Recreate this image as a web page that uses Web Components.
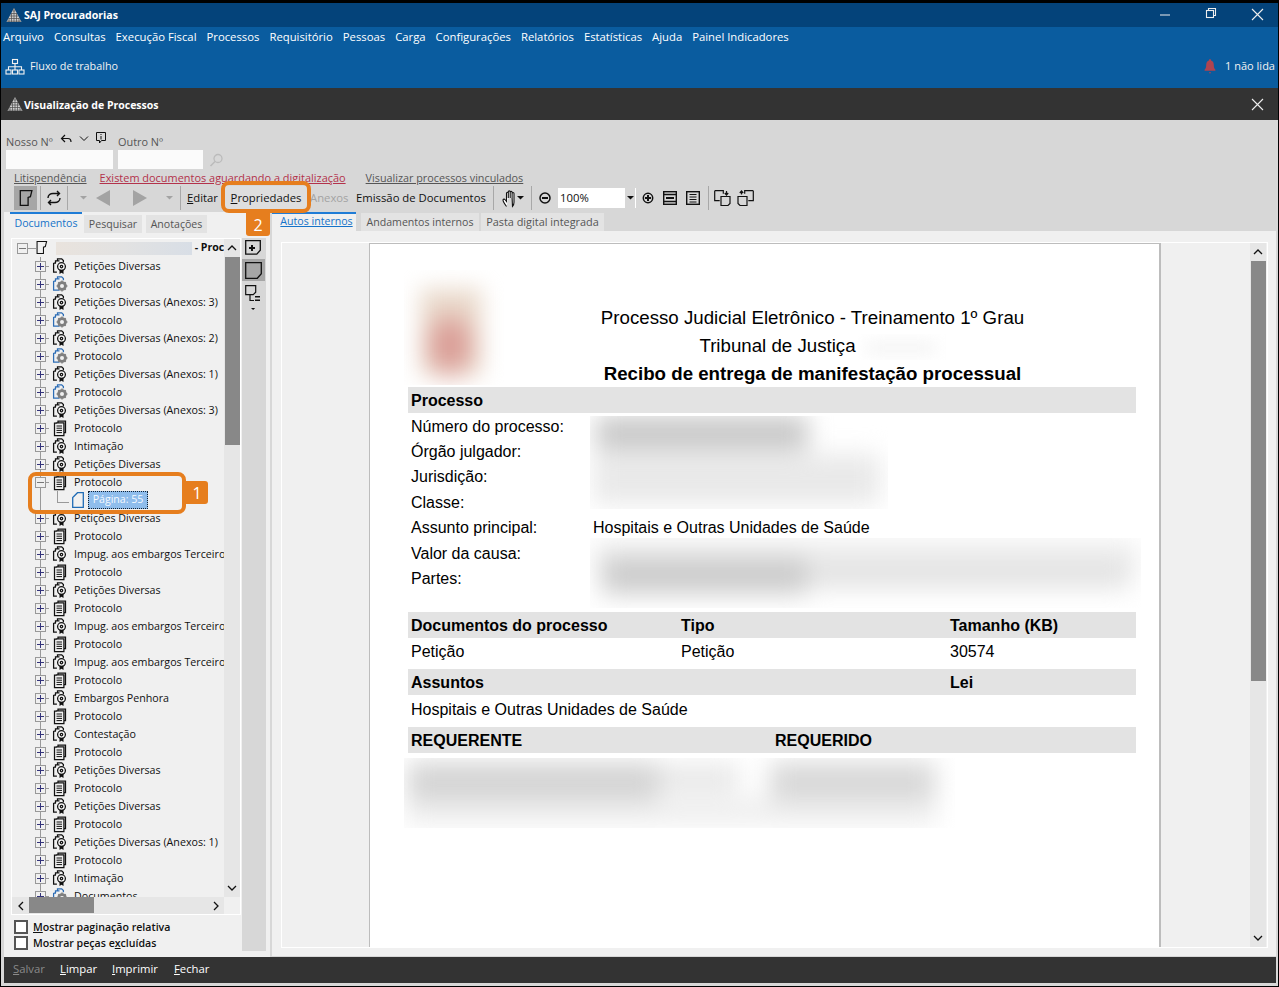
<!DOCTYPE html>
<html lang="pt-BR"><head><meta charset="utf-8"><title>SAJ Procuradorias</title>
<style>
html,body{margin:0;padding:0;background:#000;overflow:hidden}
body{width:1279px;height:987px;font:11.3px "Open Sans","Liberation Sans",sans-serif;color:#111}
</style></head><body>
<saj-app></saj-app>
<script>
const ICONS={
logo:'<path d="M8 1 15.5 15H.5Z" fill="#cfcfcf"/><path d="M1 14.2h14M2.6 11.5h10.8M4 9h8M5.4 6.5h5.2M6.7 4h2.6M8 1v14M5.5 6v9M10.5 6v9M3 11v4M13 11v4" stroke="#4a4a4a" stroke-width=".7" fill="none"/>',
flow:'<g fill="none" stroke="currentColor" stroke-width="1.1"><rect x="7.5" y="1.5" width="5" height="4"/><rect x="1" y="12" width="5" height="4"/><rect x="7.5" y="12" width="5" height="4"/><rect x="14" y="12" width="5" height="4"/><path d="M10 5.5V12M3.5 12V8.7h13V12"/></g>',
bell:'<path d="M8 1.2c.8 0 1.1.6 1.1 1.2 2.1.7 2.7 2.6 2.7 4.6 0 2.3.4 3.6 1.6 4.8v1H2.6v-1C3.8 10.600 4.200 9.300 4.200 7c0-2 .6-3.900 2.700-4.600C6.900 1.800 7.200 1.200 8 1.200Z" fill="#b04450"/><path d="M6.800 14.300h2.400L8 15.800Z" fill="#b04450"/>',
x:'<path d="M1 1l11 11M12 1 1 12" stroke="#eee" stroke-width="1.100" fill="none"/>',
restore:'<g fill="none" stroke="#eee" stroke-width="1.100"><rect x=".5" y="2.500" width="7" height="7"/><path d="M2.500 2.500v-2h7v7h-2"/></g>',
min:'<path d="M0 1h10" stroke="#eee" stroke-width="1"/>',
undo:'<path d="M5 1 1.500 4.500 5 8M2 4.500h6c2 0 3 1.500 3 3.500" fill="none" stroke="#111" stroke-width="1.200"/>',
chev:'<path d="M1 1.500 5 5.500 9 1.500" fill="none" stroke="#111"/>',
infodoc:'<path d="M.5.500h9v8h-4l-2 2.500V8.500h-3Z" fill="none" stroke="#111"/><path d="M5 2v1M5 4v3.500" stroke="#111"/>',
search:'<circle cx="9" cy="5.500" r="4" fill="none" stroke="#bbb" stroke-width="1.300"/><path d="M6 8.500 1.500 13" stroke="#bbb" stroke-width="1.600"/>',
note:'<path d="M.7.700h11.600l-1.500 6 -2.300.8v7.800H.7Z" fill="none" stroke="#111" stroke-width="1.300" transform="translate(.6 0)"/>',
refresh:'<g fill="none" stroke="#111" stroke-width="1.400"><path d="M2 8c0-3 2.500-4.500 5-4.500h6M11 1l2.500 2.500L11 6"/><path d="M14 8c0 3-2.500 4.500-5 4.500H3M5 10l-2.500 2.500L5 15"/></g>',
left:'<path d="M0 8 14 0v16Z" fill="#a3a3a3"/>',
right:'<path d="M14 8 0 0v16Z" fill="#a3a3a3"/>',
caret:'<path d="M0 0h7L3.500 3.500Z" fill="currentColor"/>',
hand:'<path d="M4.500 16.500C3 14.500 1 11.500 1 10c0-1 1.500-1.200 2.200-.2l1.300 1.700V3.300c0-1.400 1.800-1.400 1.800 0V8M6.300 8V1.800c0-1.300 1.900-1.300 1.900 0V8M8.200 8V2.300c0-1.300 1.900-1.300 1.900 0V8M10.100 8V3.500c0-1.300 1.900-1.300 1.900 0v8.700c0 1.800-.5 3.200-1.500 4.300Z" fill="#fff" stroke="#111" stroke-width="1.100"/>',
zoomout:'<circle cx="7" cy="7" r="5" fill="none" stroke="#111" stroke-width="1.500"/><path d="M4 7h6" stroke="#111" stroke-width="2"/>',
zoomin:'<circle cx="7" cy="7" r="4.700" fill="none" stroke="#111" stroke-width="1.500"/><path d="M4 7h6M7 4v6" stroke="#111" stroke-width="2"/>',
fitw:'<g fill="none" stroke="#111"><rect x=".7" y=".7" width="12.600" height="12.600" stroke-width="1.400"/><path d="M1 3.500h12M1 10.500h12" stroke-width="1.300"/><path d="M3 7h8" stroke-width="2"/></g>',
fitp:'<g fill="none" stroke="#111"><rect x=".7" y=".7" width="12.600" height="12.600" stroke-width="1.400"/><path d="M3.500 3.500h7M3.500 6h7M3.500 8.500h7M3.500 11h7" stroke-width="1"/></g>',
rotr:'<g fill="none" stroke="#111" stroke-width="1.200"><path d="M.7.700h8.600v3M.7.700v10h5M7 15.500v-9h9v7l-2 2Z"/><path d="M12.500 1v3.500M10.800 3l1.700 2 1.700-2"/></g>',
rotl:'<g fill="none" stroke="#111" stroke-width="1.200"><path d="M16.300.700H7.700v3M16.300.700v10h-5M1 6.500h9v9H3l-2-2Z"/><path d="M4.500 1v3.500M2.800 3l1.700-2 1.700 2"/></g>',
addnote:'<path d="M.7.700h14.600v9.500l-3.500 4H.7Z" fill="none" stroke="#111" stroke-width="1.300"/><path d="M4 8h6M7 5v6" stroke="#111" stroke-width="2"/>',
bignote:'<path d="M.7.700h15.600v11l-4 4.600H.7Z" fill="none" stroke="#111" stroke-width="1.300"/>',
treeic:'<g fill="none" stroke="#111" stroke-width="1.200"><path d="M.7.700h10v6.500l-2.500 2.500H.7Z"/><path d="M5 10v5.500h4"/></g><path d="M10 11h5v1.500h-5ZM10 14.500h5V16h-5Z" fill="#111"/>',
award:'<g fill="none" stroke="#111" stroke-width="1.250"><path d="M5.500 3V.9h4.200l1.700 1.700v1.700M3.500 5V2.900h4M1.600 5v9h3.300M1.600 5h2.400"/><circle cx="9.500" cy="8.600" r="3.900" fill="#f0f0f0"/><circle cx="9.500" cy="8.600" r="1.200"/></g><path d="M7.500 11.800v4.200l2-1.200 2 1.200v-4.200Z" fill="#111"/>',
awardblue:'<g fill="none" stroke="#2d6db5" stroke-width="1.250"><path d="M5.500 3V.9h4.200l1.700 1.700v1.700M3.500 5V2.900h4M1.600 5v9h6M1.600 5h2.400"/></g><circle cx="10" cy="10" r="4.800" fill="#7f7f7f"/><path d="M10 4.600v10.800M4.600 10h10.800M6.300 6.300l7.400 7.400M13.700 6.300l-7.400 7.400" stroke="#7f7f7f" stroke-width="1.400"/><circle cx="10" cy="10" r="2" fill="#f0f0f0"/>',
clip:'<g fill="none" stroke="#111" stroke-width="1.250"><path d="M6 3V1h7.500v11.500H12M4.500 3v-.1h7.400v12.600H2.500V3Z"/><path d="M4.500 6h5.500M4.500 8.200h5.500M4.500 10.400h5.500M4.500 12.600h5.500" stroke-width="1"/></g>',
page:'<path d="M.7 15.300V5.500L5.500.7h5.800v14.600Z" fill="none" stroke="#1f6bb5" stroke-width="1.300"/>',
up:'<path d="M1 5 5 1 9 5" fill="none" stroke="#111" stroke-width="1.300"/>',
down:'<path d="M1 1 5 5 9 1" fill="none" stroke="#111" stroke-width="1.300"/>',
lft:'<path d="M5 1 1 5 5 9" fill="none" stroke="#111" stroke-width="1.300"/>',
rgt:'<path d="M1 1 5 5 1 9" fill="none" stroke="#111" stroke-width="1.300"/>'
};
const BOX={logo:16,flow:20,bell:16,x:13,restore:10,min:10,undo:12,chev:10,infodoc:10,search:14,note:13,refresh:16,left:14,right:14,caret:7,hand:13,zoomout:14,zoomin:14,fitw:14,fitp:14,rotr:17,rotl:17,addnote:16,bignote:17,treeic:16,award:16,awardblue:16,clip:16,page:12,up:10,down:10,lft:6,rgt:6};
const BOXH={flow:17,hand:17,caret:4,restore:10,min:2,undo:9,chev:7,infodoc:11,note:16,left:16,right:16,page:16,up:6,down:6,lft:10,rgt:10,rotr:16,rotl:16};
function def(name,css,html,init){
  customElements.define(name,class extends HTMLElement{
    constructor(){super();this.attachShadow({mode:'open'});}
    connectedCallback(){
      if(this._done)return;this._done=1;
      this.shadowRoot.innerHTML='<style>'+css+'</style>'+(typeof html==='function'?html(this):html);
      if(init)init(this);
    }
  });
}
def('saj-icon',':host{display:inline-flex;flex:none;line-height:0}svg{display:block;overflow:visible}','',el=>{
  const n=el.getAttribute('name'),w=BOX[n]||16,h=BOXH[n]||w,s=parseFloat(el.getAttribute('scale')||1);
  el.shadowRoot.innerHTML+=`<svg width="${w*s}" height="${h*s}" viewBox="0 0 ${w} ${h}">${ICONS[n]}</svg>`;
});
def('saj-titlebar',`:host{display:flex;align-items:center;height:24px;background:#04437a;color:#fff;padding:0 14px 0 5px}
b{font-size:10.6px;font-weight:700;margin:0 0 0 2px;flex:1}
.c{display:flex;align-items:center;justify-content:center}
`,`<saj-icon name="logo"></saj-icon><b><slot></slot></b>
<span class="c" style="margin-right:36px"><saj-icon name="min"></saj-icon></span>
<span class="c" style="margin-right:35px;margin-bottom:5px"><saj-icon name="restore"></saj-icon></span>
<span class="c" style="margin-bottom:2px"><saj-icon name="x"></saj-icon></span>`);
def('saj-ribbon',`:host{display:flex;flex-direction:column;height:61px;background:#0a5c9f;color:#fff}
nav{display:flex;gap:10px;height:20px;align-items:center;padding-left:2px}
nav span{margin-bottom:2px}
.flow{display:flex;align-items:center;height:38px;padding:0 3px 0 4px;color:#f2f2f2;font-size:10.8px}
.flow span{margin:0 0 2px 5px;flex:1}
.flow i{font-style:normal;margin:0 0 2px 7px;font-size:11px}`,
`<nav>${['Arquivo','Consultas','Execução Fiscal','Processos','Requisitório','Pessoas','Carga','Configurações','Relatórios','Estatísticas','Ajuda','Painel Indicadores'].map(t=>`<span>${t}</span>`).join('')}</nav>
<div class="flow"><saj-icon name="flow"></saj-icon><span>Fluxo de trabalho</span><saj-icon name="bell"></saj-icon><i>1 não lida</i></div>`);
def('saj-subtitle',`:host{display:flex;align-items:center;height:32px;background:#333;color:#fff;padding:0 14px 0 6px}
b{font-size:10.5px;font-weight:700;margin:2px 0 0 1px;flex:1}`,`<saj-icon name="logo"></saj-icon><b><slot></slot></b><saj-icon name="x"></saj-icon>`);
def('saj-form',`:host{display:block;height:65px;padding-left:5px;color:#555;box-sizing:border-box;font-size:10.9px}
.r1{display:flex;height:49px}
.f{display:flex;flex-direction:column}
.lab{display:flex;align-items:flex-end;margin-top:10px;height:17px;padding-bottom:3px;line-height:11px}
.inp{background:#fbfbfb;height:19px}
.l{display:flex;height:16px;align-items:flex-end;padding-left:8px;line-height:14px;font-size:10.8px}
a{text-decoration:underline;color:#555}
a.r{color:#b3324b;margin-left:13px;font-size:10.95px}
a.v{margin-left:20px}`,
`<div class="r1">
<div class="f" style="width:107px;margin-right:5px"><div class="lab"><span>Nosso Nº</span>
<saj-icon name="undo" style="margin:0 0 4px 7px"></saj-icon><saj-icon name="chev" style="margin:0 0 5px 7px"></saj-icon><saj-icon name="infodoc" style="margin:0 0 4px 7px"></saj-icon></div><div class="inp"></div></div>
<div class="f" style="width:85px"><div class="lab"><span>Outro Nº</span></div><div class="inp"></div></div>
<saj-icon name="search" style="margin:33px 0 0 6px"></saj-icon></div>
<div class="l"><a>Litispendência</a><a class="r">Existem documentos aguardando a digitalização</a><a class="v">Visualizar processos vinculados</a></div>`);
def('saj-toolbar',`:host{display:flex;align-items:center;height:26px;padding-left:13px;color:#111;box-sizing:border-box}
.i{display:flex;align-items:center;justify-content:center;height:24px;flex:none}
.sep{width:1px;height:24px;background:#a8a8a8;flex:none}
.on{background:#a6a6a6}
.t{white-space:nowrap;flex:none;text-align:left;padding-bottom:2px}
.g{color:#a3a3a3}
.zoom{display:flex;width:78px;height:20px;background:#fff;flex:none;align-items:center;padding-left:2px;box-sizing:border-box;justify-content:space-between}
.zoom i{font-style:normal;margin-bottom:2px}
.zoom span{width:10px;height:20px;background:#d7d7d7;display:flex;align-items:center;justify-content:center;margin-right:1px}
.prop{background:#dedede;height:25px;display:flex;align-items:center;justify-content:center;padding:0}
.prop span{margin-bottom:2px}
u{text-decoration:underline}`,
`<div class="i on" style="width:23px"><saj-icon name="note"></saj-icon></div>
<div style="width:3px"></div><div class="sep"></div>
<div class="i" style="width:26px"><saj-icon name="refresh"></saj-icon></div>
<div class="sep"></div>
<div class="i g" style="width:28px;padding-left:2px;box-sizing:border-box"><saj-icon name="caret"></saj-icon></div>
<div class="i" style="width:14px"><saj-icon name="left"></saj-icon></div><div style="width:23px"></div>
<div class="i" style="width:14px"><saj-icon name="right"></saj-icon></div>
<div class="i g" style="width:33px;padding-left:12px;box-sizing:border-box"><saj-icon name="caret"></saj-icon></div>
<div class="sep"></div>
<div class="t" style="width:43px;padding-left:6px;box-sizing:border-box"><u>E</u>ditar</div>
<div class="t prop" style="width:84px"><span><u>P</u>ropriedades</span></div>
<div class="t g" style="width:48px;padding-left:2px;box-sizing:border-box">Anexos</div>
<div class="t" style="width:137px">Emissão de Documentos</div>
<div class="sep"></div>
<div class="i" style="width:23px;padding-left:5px;box-sizing:border-box"><saj-icon name="hand"></saj-icon></div>
<div class="i" style="width:7px;color:#111"><saj-icon name="caret"></saj-icon></div>
<div class="i" style="width:7px"></div><div class="sep"></div>
<div class="i" style="width:26px"><saj-icon name="zoomout"></saj-icon></div>
<div class="zoom"><i>100%</i><span><saj-icon name="caret"></saj-icon></span></div>
<div class="i" style="width:24px"><saj-icon name="zoomin"></saj-icon></div>
<div class="i" style="width:20px"><saj-icon name="fitw"></saj-icon></div>
<div class="i" style="width:26px"><saj-icon name="fitp"></saj-icon></div>
<div style="width:2px"></div><div class="sep"></div>
<div class="i" style="width:26px"><saj-icon name="rotr"></saj-icon></div>
<div class="i" style="width:20px"><saj-icon name="rotl"></saj-icon></div>`);
def('saj-tree-row',`:host{display:flex;align-items:center;height:18px;position:relative;white-space:nowrap;color:#111;font-size:10.7px;
background:linear-gradient(#999,#999) 28px 0/1px 100% no-repeat,linear-gradient(#999,#999) 28px 9px/9px 1px no-repeat}
.tw{width:11px;height:11px;margin-left:23px;box-sizing:border-box;border:1px solid #999;background:#f0f0f0;position:relative;flex:none}
.tw:before{content:"";position:absolute;left:1px;right:1px;height:1px;top:4px;background:var(--m,#33337a)}
.tw.p:after{content:"";position:absolute;top:1px;bottom:1px;left:4px;width:1px;background:var(--m,#33337a)}
saj-icon{margin-left:6px;margin-right:6px}
span{flex:none}`,
el=>{const n=el.getAttribute('icon');const t=el.getAttribute('tw');
 return `<div class="tw ${t==='m'?'':'p'}" style="${t==='m'?'--m:#777':''}"></div><saj-icon name="${n}"></saj-icon><span><slot></slot></span>`;});
def('saj-tree-page',`:host{display:flex;align-items:center;height:18px;color:#fff;white-space:nowrap;font-size:10.6px;
background:linear-gradient(#999,#999) 28px 0/1px 100% no-repeat,linear-gradient(#999,#999) 45px 0/1px 12px no-repeat,linear-gradient(#999,#999) 45px 11px/12px 1px no-repeat}
saj-icon{margin-left:60px}
span{margin-left:4px;background:#8fbdec;border:1px dotted #123;height:16px;line-height:15px;padding:0 3px;width:52px;text-align:center;color:#f4f9ff;flex:none}`,
`<saj-icon name="page"></saj-icon><span><slot></slot></span>`);
def('saj-tree-root',`:host{display:flex;align-items:center;height:18px;white-space:nowrap;font-size:10.6px}
.tw{width:11px;height:11px;box-sizing:border-box;border:1px solid #999;margin-left:5px;position:relative;flex:none}
.tw:before{content:"";position:absolute;left:1px;right:1px;top:4px;height:1px;background:#777}
.c{width:8px;height:1px;background:#999;flex:none}
.bl{width:136px;height:13px;background:linear-gradient(90deg,#e9e3dd,#e2e2e2 50%,#d8dee6);flex:none;margin:0 3px 0 9px}
b{font-weight:700;flex:none;margin-bottom:2px}`,
`<div class="tw"></div><div class="c"></div><saj-icon name="note" scale=".82"></saj-icon><div class="bl"></div><b>- Processo</b>`);
const R=[['Petições Diversas','award'],['Protocolo','awardblue'],['Petições Diversas (Anexos: 3)','award'],['Protocolo','awardblue'],['Petições Diversas (Anexos: 2)','award'],['Protocolo','awardblue'],['Petições Diversas (Anexos: 1)','award'],['Protocolo','awardblue'],['Petições Diversas (Anexos: 3)','award'],['Protocolo','clip'],['Intimação','award'],['Petições Diversas','award'],['Protocolo','clip','m'],['P'],['Petições Diversas','award'],['Protocolo','clip'],['Impug. aos embargos Terceiro','award'],['Protocolo','clip'],['Petições Diversas','award'],['Protocolo','clip'],['Impug. aos embargos Terceiro','award'],['Protocolo','clip'],['Impug. aos embargos Terceiro','award'],['Protocolo','clip'],['Embargos Penhora','award'],['Protocolo','clip'],['Contestação','award'],['Protocolo','clip'],['Petições Diversas','award'],['Protocolo','clip'],['Petições Diversas','award'],['Protocolo','clip'],['Petições Diversas (Anexos: 1)','award'],['Protocolo','clip'],['Intimação','award'],['Documentos','awardblue']];
def('saj-scrollbar',`:host{display:flex;background:#e6e6e6;flex:none;justify-content:space-between}
:host([dir-v]){flex-direction:column;width:16px;align-items:center}
:host([dir-h]){flex-direction:row;height:17px;align-items:center}
.b{display:flex;align-items:center;justify-content:center;flex:none}
:host([dir-v]) .b{height:18px;width:16px}
:host([dir-h]) .b{width:17px;height:17px}
.t{background:#888;flex:none}
.tr{flex:1;display:flex;min-width:0;min-height:0}
:host([dir-v]) .tr{flex-direction:column;width:15px}
:host([dir-h]) .tr{height:16px;align-self:flex-start}`,
el=>{const v=el.hasAttribute('dir-v'),s=el.getAttribute('start'),l=el.getAttribute('len');
return `<div class="b"><saj-icon name="${v?'up':'lft'}"></saj-icon></div><div class="tr"><div class="t" style="${v?'height':'width'}:${l}px;${v?'width:15px':'height:16px'};margin-${v?'top':'left'}:${s}px"></div></div><div class="b"><saj-icon name="${v?'down':'rgt'}"></saj-icon></div>`;});
def('saj-tree',`:host{display:grid;grid-template-columns:1fr 16px;grid-template-rows:1fr 17px;border:1px solid #fff;height:677px;box-sizing:border-box;width:230px;margin-left:1px}
.v{overflow:hidden;background:#f0f0f0;min-width:0;min-height:0}`,
`<div class="v"><saj-tree-root></saj-tree-root>${R.map(r=>r[0]==='P'?'<saj-tree-page>Página: 55</saj-tree-page>':`<saj-tree-row icon="${r[1]}" ${r[2]?'tw="m"':''}>${r[0]}</saj-tree-row>`).join('')}</div>
<saj-scrollbar dir-v start="0" len="188"></saj-scrollbar><saj-scrollbar dir-h start="0" len="65"></saj-scrollbar>`);
def('saj-check',`:host{display:flex;align-items:center;height:16px;font-weight:600;color:#111;font-size:10.6px}
i{width:14px;height:14px;box-sizing:border-box;border:2px solid #555;background:#fff;margin-right:5px;flex:none}
u{text-decoration:underline}`,`<i></i><span><slot></slot></span>`);
def('saj-left',`:host{display:flex;flex-direction:column;width:266px;background:#f0f0f0;height:745px;margin-top:1px;box-sizing:border-box;padding-left:6px;font-size:10.6px}
.tabs{display:flex;height:21px;color:#555}
.tab{background:#e3e3e3;margin-top:3px;height:18px;line-height:18px;text-align:center;flex:none}
.tab.a{background:#f0f0f0;border-top:2px solid #1f7cd6;color:#1573c9;margin-top:0;height:20px;width:72px;line-height:18px;box-sizing:border-box}
.body{display:flex;margin-top:5px}
.col{width:232px}
.strip{width:24px;height:713px;background:#d7d7d7;display:flex;flex-direction:column;align-items:flex-start}
.strip saj-icon{margin-left:3px}
.strip .sel{width:23px;height:22px;background:#a6a6a6;display:flex;align-items:center;justify-content:center;margin-top:3px}
.strip .sel saj-icon{margin-left:0}
.checks{margin:4px 0 0 4px}`,
`<div class="tabs"><div class="tab a">Documentos</div><div class="tab" style="width:58px;margin-left:2px">Pesquisar</div><div class="tab" style="width:61px;margin-left:4px">Anotações</div></div>
<div class="body"><div class="col"><saj-tree></saj-tree><div class="checks"><saj-check><u>M</u>ostrar paginação relativa</saj-check><saj-check>Mostrar peças e<u>x</u>cluídas</saj-check></div></div>
<div class="strip"><saj-icon name="addnote" style="margin-top:2px"></saj-icon><div class="sel"><saj-icon name="bignote"></saj-icon></div><saj-icon name="treeic" style="margin-top:4px"></saj-icon><div style="margin:5px 0 0 9px;line-height:0;color:#111"><saj-icon name="caret" scale=".6" style="margin:0"></saj-icon></div></div></div>`);
def('saj-blur',`:host{display:block;position:absolute;overflow:hidden;background:#fff}
div{position:absolute;inset:0;filter:blur(var(--b,12px));background:var(--g)}`,`<div></div>`);
def('saj-band',`:host{display:grid;height:26px;align-items:center;background:#e3e3e3;font-weight:700;padding:2px 0 0 3px;box-sizing:border-box}`,`<slot></slot>`);
def('saj-doc',`:host{display:block;position:relative;width:792px;box-sizing:border-box;height:704px;background:#fff;border:solid #bdbdbd;border-width:1px 2px 0 1px;padding:60px 23px 0 38px;font:16px/1 "Liberation Sans",Arial,sans-serif;color:#000;overflow:hidden;flex:none}
.hd{padding-left:81px;text-align:center;font-size:18.7px}
.hd div{height:28px;line-height:28px;white-space:nowrap}
.hd .b{font-weight:700;height:27px}
.hd i{display:inline-block;width:70px}
.rows{height:199px;box-sizing:border-box;padding-top:1px}
.row{display:grid;grid-template-columns:182px 1fr;height:25.400px;align-items:center;padding-left:3px}
.t3{display:grid;height:26px;align-items:center;padding:2px 0 0 3px;box-sizing:border-box;grid-template-columns:270px 269px 1fr}
.gap{height:5px}`,
`<div class="hd"><div>Processo Judicial Eletrônico - Treinamento 1º Grau</div><div>Tribunal de Justiça<i></i></div><div class="b">Recibo de entrega de manifestação processual</div></div>
<saj-band>Processo</saj-band>
<div class="rows"><div class="row"><span>Número do processo:</span></div><div class="row"><span>Órgão julgador:</span></div><div class="row"><span>Jurisdição:</span></div><div class="row"><span>Classe:</span></div><div class="row"><span>Assunto principal:</span><span>Hospitais e Outras Unidades de Saúde</span></div><div class="row"><span>Valor da causa:</span></div><div class="row"><span>Partes:</span></div></div>
<saj-band style="grid-template-columns:270px 269px 1fr"><span>Documentos do processo</span><span>Tipo</span><span>Tamanho (KB)</span></saj-band>
<div class="t3"><span>Petição</span><span>Petição</span><span>30574</span></div>
<div class="gap"></div>
<saj-band style="grid-template-columns:539px 1fr"><span>Assuntos</span><span>Lei</span></saj-band>
<div class="t3" style="height:32px;align-items:start;padding-top:7px"><span style="grid-column:1/4;white-space:nowrap">Hospitais e Outras Unidades de Saúde</span></div>
<saj-band style="grid-template-columns:364px 1fr"><span>REQUERENTE</span><span>REQUERIDO</span></saj-band>
<saj-blur style="left:34px;top:26px;width:101px;height:115px;--b:11px;--g:radial-gradient(ellipse 30px 40px at 46px 75px,#d58f8a 0,#deaaa2 55%,rgba(235,215,205,0) 100%),linear-gradient(#eadbcd,#eadbcd) 16px 18px/62px 88px no-repeat"></saj-blur>
<saj-blur style="left:488px;top:90px;width:88px;height:26px;--b:8px;--g:linear-gradient(#f3f3f3,#f3f3f3) 8px 8px/70px 12px no-repeat"></saj-blur>
<saj-blur style="left:220px;top:172px;width:298px;height:93px;--g:linear-gradient(#c8c8c8,#c8c8c8) 6px 0/212px 34px no-repeat,linear-gradient(#e9e9e9,#e9e9e9) 4px 38px/286px 50px no-repeat"></saj-blur>
<saj-blur style="left:220px;top:294px;width:551px;height:70px;--g:linear-gradient(#cccccc,#cccccc) 12px 20px/205px 36px no-repeat,linear-gradient(#e2e2e2,#e2e2e2) 205px 26px/335px 24px no-repeat,linear-gradient(#ececec,#ececec) 6px 4px/540px 30px no-repeat"></saj-blur>
<saj-blur style="left:34px;top:514px;width:551px;height:70px;--g:linear-gradient(#d4d4d4,#d4d4d4) 4px 4px/250px 38px no-repeat,linear-gradient(#e8e8e8,#e8e8e8) 250px 6px/85px 28px no-repeat,linear-gradient(#d8d8d8,#d8d8d8) 366px 4px/165px 38px no-repeat,linear-gradient(#eeeeee,#eeeeee) 2px 40px/530px 26px no-repeat"></saj-blur>`);
def('saj-viewer',`:host{display:flex;flex-direction:column;flex:none;width:1004px;height:744px;margin-top:1px;font-size:10.6px}
.tabs{display:flex;height:19px;color:#555}
.tab{background:#e3e3e3;height:18px;line-height:18px;text-align:center;flex:none;margin-top:1px}
.tab.a{background:#f0f0f0;border-top:2px solid #1f7cd6;color:#1573c9;margin-top:0;height:19px;width:84px;line-height:15px;box-sizing:border-box;padding-left:5px}
.tab.a span{text-decoration:underline}
.pan{background:#f0f0f0;flex:1;padding:11px 8px 9px 9px;display:flex;min-height:0}
.fr{flex:1;border:1px solid #fff;display:flex;min-height:0;box-sizing:border-box;height:706px;padding-right:1px}
.sc{flex:1;display:flex;justify-content:center;padding:0 1px;min-width:0}
saj-doc{margin-left:-2px}`,
`<div class="tabs"><div class="tab a"><span>Autos internos</span></div><div class="tab" style="width:118px;margin-left:5px">Andamentos internos</div><div class="tab" style="width:123px;margin-left:2px;font-size:10.9px">Pasta digital integrada</div></div>
<div class="pan"><div class="fr"><div class="sc"><saj-doc></saj-doc></div><saj-scrollbar dir-v start="0" len="420"></saj-scrollbar></div></div>`);
def('saj-process',`:host{display:block;height:837px;background:#d7d7d7}
.main{display:flex;height:746px;padding-left:3px}
.g{width:2px;flex:none}`,
`<saj-form></saj-form><saj-toolbar></saj-toolbar>
<div class="main"><saj-left></saj-left><div class="g"></div><saj-viewer></saj-viewer></div>`);
def('saj-footer',`:host{display:flex;align-items:center;height:26px;background:#333;color:#fff;margin:0 2px 0 3px;padding-left:9px;box-sizing:border-box}
span{flex:none;margin-bottom:4px}
u{text-decoration:underline}`,
`<span style="color:#8a8a8a;width:47px"><u>S</u>alvar</span><span style="width:52px"><u>L</u>impar</span><span style="width:62px"><u>I</u>mprimir</span><span><u>F</u>echar</span>`);
def('saj-callout',`:host{display:block;position:absolute;box-sizing:border-box;border:4px solid #e67e1e;border-radius:8px}
b{position:absolute;background:#e67e1e;color:#fff;font:500 16px/1 "Open Sans",sans-serif;display:flex;align-items:center;justify-content:center}`,
el=>`<b style="${el.getAttribute('tag')}">${el.getAttribute('n')}</b>`);
def('saj-app',`:host{display:block;position:relative;width:1277px;height:983px;margin:3px 0 0 1px;background:#d7d7d7;overflow:hidden}`,
`<saj-titlebar>SAJ Procuradorias</saj-titlebar><saj-ribbon></saj-ribbon><saj-subtitle>Visualização de Processos</saj-subtitle><saj-process></saj-process><saj-footer></saj-footer>
<saj-callout n="1" style="left:27px;top:469px;width:158px;height:42px" tag="left:154px;top:5px;width:22px;height:23px;border-radius:0 3px 3px 0"></saj-callout>
<saj-callout n="2" style="left:220px;top:178px;width:90px;height:32px" tag="left:21px;top:28px;width:24px;height:23px;border-radius:0 0 3px 3px"></saj-callout>`);
</script></body></html>
